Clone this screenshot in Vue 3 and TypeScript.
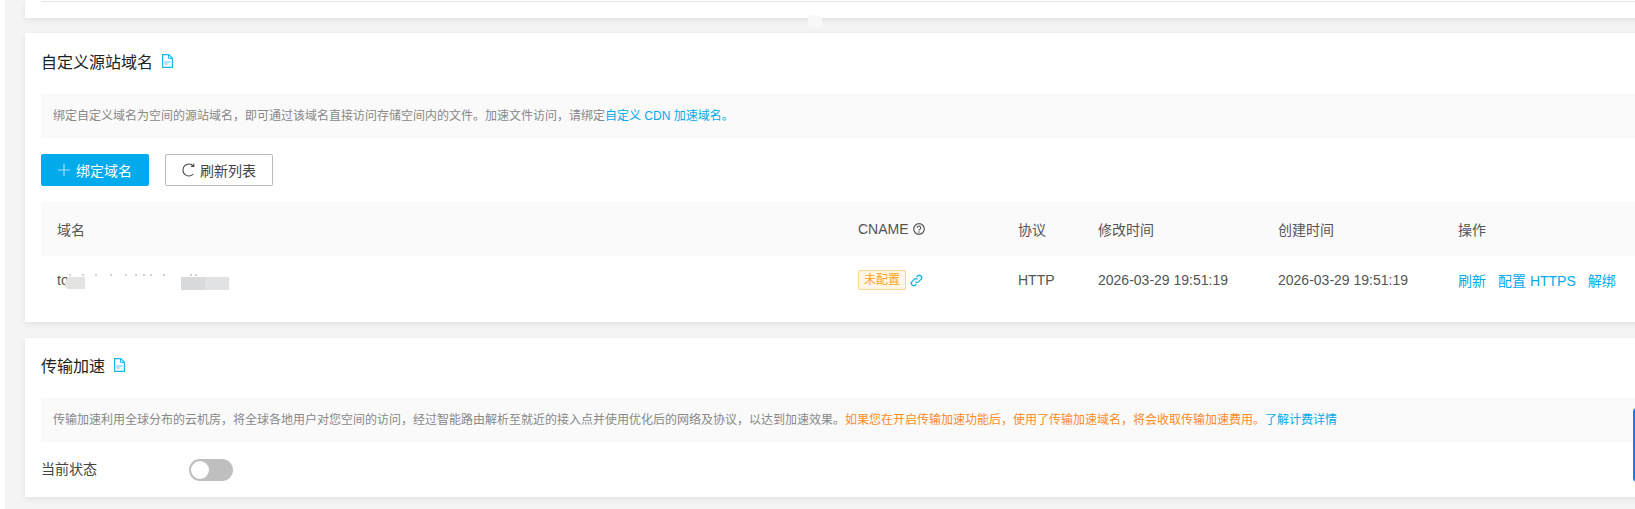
<script setup lang="ts">
interface Column {
  label: string
  help?: boolean
}

const columns: Column[] = [
  { label: '域名' },
  { label: 'CNAME', help: true },
  { label: '协议' },
  { label: '修改时间' },
  { label: '创建时间' },
  { label: '操作' },
]

const actions = ['刷新', '配置 HTTPS', '解绑']
const stamp = '2026-03-29 19:51:19'

// bits of the masked domain that stick out above the white patch
const ticks = [4, 17, 30, 45, 60, 70, 78, 85, 98, 125, 130]
</script>

<template>
  <div class="page">
    <section class="card card-top">
      <div class="top-line" />
    </section>
    <span class="bump" />

    <section class="card card-origin">
      <h2 class="title">
        自定义源站域名
        <svg class="doc" viewBox="0 0 11 14" width="11" height="14">
          <path d="M.6.6h6.2l3.6 3.6v9.2H.6z" fill="none" stroke="#1cb4ef" stroke-width="1.2" />
          <path d="M6.6.8v3.6h3.6" fill="none" stroke="#1cb4ef" stroke-width="1" />
          <path d="M2.5 7h6v2h-6z" fill="#a5e0f7" />
          <path d="M2.5 9h3v2h-3z" fill="#a5e0f7" />
        </svg>
      </h2>
      <div class="info">
        绑定自定义域名为空间的源站域名，即可通过该域名直接访问存储空间内的文件。加速文件访问，请绑定<a class="link">自定义 CDN 加速域名。</a>
      </div>
      <div class="toolbar">
        <button class="btn btn-primary">
          <svg viewBox="0 0 12 12" width="12" height="12">
            <path d="M6 0v12M0 6h12" stroke="#a6e1f8" stroke-width="1.2" />
          </svg>
          绑定域名
        </button>
        <button class="btn btn-plain">
          <svg viewBox="0 0 13 14" width="13" height="14">
            <path d="M11.4 3A6 6 0 1 0 11.4 11" fill="none" stroke="#444" stroke-width="1.1" />
            <path d="M9 3.4h2.8V.8" fill="none" stroke="#444" stroke-width="1.1" />
          </svg>
          刷新列表
        </button>
      </div>
      <div class="table">
        <div class="row head">
          <div v-for="col in columns" :key="col.label" class="cell">
            {{ col.label }}
            <svg v-if="col.help" viewBox="0 0 12 12" width="12" height="12">
              <circle cx="6" cy="6" r="5.3" fill="none" stroke="#555" stroke-width="1.2" />
              <path d="M4.3 4.8a1.7 1.7 0 1 1 2.6 1.4c-.6.3-.9.6-.9 1.2" fill="none" stroke="#555" stroke-width="1.1" />
              <circle cx="6" cy="9" r=".8" fill="#555" />
            </svg>
          </div>
        </div>
        <div class="row body">
          <div class="cell domain">
            to
            <svg class="ticks" viewBox="0 0 140 3" width="140" height="3">
              <path v-for="x in ticks" :key="x" :d="`M${x} 0v2`" stroke="#9aa4ad" stroke-width="1" />
            </svg>
            <span class="mask mask-a" />
            <span class="mask mask-b" />
          </div>
          <div class="cell">
            <span class="tag">未配置</span>
            <svg viewBox="0 0 14 14" width="13" height="13">
              <path d="M5.8 8.2a2.5 2.5 0 0 0 3.6 0l2.4-2.4a2.5 2.5 0 0 0-3.6-3.6L7.1 3.3M8.2 5.8a2.5 2.5 0 0 0-3.6 0L2.2 8.2a2.5 2.5 0 0 0 3.6 3.6l1.1-1.1" fill="none" stroke="#14b0ee" stroke-width="1.4" />
            </svg>
          </div>
          <div class="cell">HTTP</div>
          <div class="cell">{{ stamp }}</div>
          <div class="cell">{{ stamp }}</div>
          <div class="cell ops">
            <a v-for="a in actions" :key="a" class="link">{{ a }}</a>
          </div>
        </div>
      </div>
    </section>

    <section class="card card-speed">
      <h2 class="title">
        传输加速
        <svg class="doc" viewBox="0 0 11 14" width="11" height="14">
          <path d="M.6.6h6.2l3.6 3.6v9.2H.6z" fill="none" stroke="#1cb4ef" stroke-width="1.2" />
          <path d="M6.6.8v3.6h3.6" fill="none" stroke="#1cb4ef" stroke-width="1" />
          <path d="M2.5 7h6v2h-6z" fill="#a5e0f7" />
          <path d="M2.5 9h3v2h-3z" fill="#a5e0f7" />
        </svg>
      </h2>
      <div class="info">
        传输加速利用全球分布的云机房，将全球各地用户对您空间的访问，经过智能路由解析至就近的接入点并使用优化后的网络及协议，以达到加速效果。<span class="warn">如果您在开启传输加速功能后，使用了传输加速域名，将会收取传输加速费用。</span><a class="link">了解计费详情</a>
      </div>
      <div class="status">
        <span class="status-label">当前状态</span>
        <span class="switch"><span class="knob" /></span>
      </div>
    </section>

    <span class="edge" />
  </div>
</template>

<style>
html,
body {
  margin: 0;
  overflow: hidden;
  background: #fff;
}
</style>

<style scoped>
.page {
  position: relative;
  box-sizing: border-box;
  width: 1635px;
  height: 509px;
  margin-left: 5px;
  padding-left: 20px;
  overflow: hidden;
  background: #f4f4f4;
  font-family: "Liberation Sans", "Noto Sans CJK SC", sans-serif;
  font-size: 14px;
  color: #555;
}

.card {
  width: 1640px;
  box-sizing: border-box;
  background: #fff;
  box-shadow: 0 2px 6px rgba(0, 0, 0, 0.08);
}

.card-top {
  height: 18px;
  padding-left: 16px;
}

.top-line {
  height: 1px;
  border-bottom: 1px solid #e4e4e4;
}

.bump {
  position: absolute;
  left: 803px;
  top: 15px;
  width: 14px;
  height: 13px;
  border-radius: 5px;
  background: #f8f8f8;
}

.card-origin {
  height: 289px;
  margin-top: 15px;
  padding: 0 0 0 16px;
}

.card-speed {
  height: 159px;
  margin-top: 16px;
  padding: 0 0 0 16px;
}

.title {
  display: flex;
  align-items: center;
  gap: 9px;
  box-sizing: border-box;
  height: 60px;
  margin: 0;
  padding-bottom: 6px;
  font-size: 16px;
  font-weight: 400;
  color: #222;
}

.card-origin .title {
  height: 61px;
}

.info {
  box-sizing: border-box;
  height: 44px;
  padding-left: 12px;
  line-height: 44px;
  background: #fafafa;
  font-size: 12px;
  color: #888;
  white-space: nowrap;
}

.link {
  color: #00aaeb;
}

.warn {
  color: #ff8a1f;
}

.toolbar {
  display: flex;
  gap: 16px;
  margin-top: 16px;
}

.btn {
  display: flex;
  align-items: center;
  justify-content: center;
  box-sizing: border-box;
  width: 108px;
  height: 32px;
  padding: 0;
  border-radius: 2px;
  font-family: inherit;
  font-size: 14px;
}

.btn-primary {
  gap: 6px;
  border: 0;
  background: #00aaeb;
  color: #fff;
}

.btn-plain {
  gap: 5px;
  border: 1px solid #bbb;
  background: #fff;
  color: #444;
}

.table {
  margin-top: 16px;
}

.row {
  display: grid;
  grid-template-columns: 801px 160px 80px 180px 180px 240px;
}

.head {
  height: 54px;
  padding-bottom: 1px;
  box-sizing: border-box;
  background: #fafafa;
}

.body {
  height: 48px;
}

.cell {
  position: relative;
  display: flex;
  align-items: center;
  gap: 4px;
  padding-left: 16px;
  white-space: nowrap;
}

.domain {
  gap: 0;
}

.ticks {
  position: absolute;
  left: 25px;
  top: 18px;
}

.mask {
  position: absolute;
  top: 21px;
  height: 13px;
}

.mask-a {
  left: 24px;
  width: 20px;
  height: 12px;
  border-radius: 6px 0 0 4px;
  background: #e3e3e1;
}

.mask-b {
  left: 140px;
  width: 48px;
  background: linear-gradient(90deg, #d9dadb 50%, #e1e2e3 50%);
}

.tag {
  box-sizing: border-box;
  height: 20px;
  padding: 0 5px;
  border: 1px solid #ffd58f;
  border-radius: 2px;
  background: #fff6e6;
  color: #ffa31a;
  font-size: 12px;
  line-height: 18px;
}

.ops {
  gap: 12px;
}

.status {
  display: flex;
  align-items: center;
  margin-top: 7px;
  height: 42px;
}

.status-label {
  width: 148px;
  padding-bottom: 4px;
  color: #444;
}

.switch {
  position: relative;
  width: 44px;
  height: 22px;
  border-radius: 11px;
  background: #bfbfbf;
}

.knob {
  position: absolute;
  left: 2px;
  top: 2px;
  width: 18px;
  height: 18px;
  border-radius: 50%;
  background: #fff;
}

.edge {
  position: absolute;
  right: 3px;
  top: 408px;
  width: 4px;
  height: 74px;
  border-radius: 4px 0 0 4px;
  background: #1677ff;
}
</style>
